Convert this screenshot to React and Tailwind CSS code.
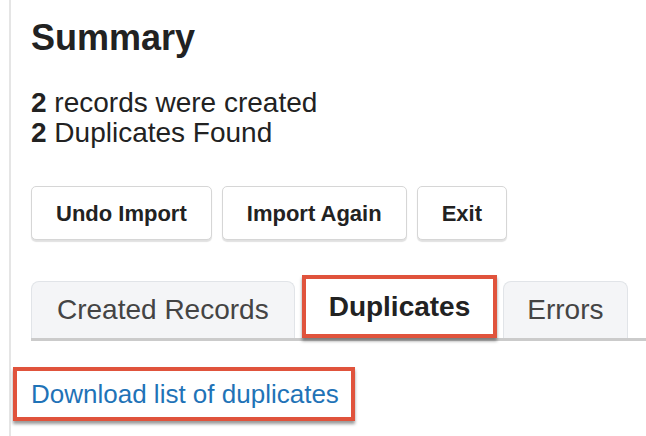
export default function App() {
  return (
    <div className="w-[646px] h-[436px] overflow-hidden bg-white font-['Liberation_Sans',Arial,sans-serif] text-[#222]">
      <div className="ml-[9px] h-full border-l-[2px] border-[#e5e5e5] pl-[20px] pt-[18px]">
        {/* heading */}
        <h1 className="text-[36px] leading-[40px] font-bold">Summary</h1>

        {/* counts */}
        <div className="mt-[30px] text-[28px] leading-[30px]">
          <p><b>2</b> records were created</p>
          <p><b>2</b> Duplicates Found</p>
        </div>

        {/* actions */}
        <div className="mt-[38px] flex gap-[10px]">
          {['Undo Import', 'Import Again', 'Exit'].map((label) => (
            <button
              key={label}
              className="h-[54px] px-[24px] rounded-[5px] border border-[#d6d6d6] bg-white text-[22px] font-bold text-[#222] shadow-[0_2px_1px_rgba(0,0,0,0.12)]"
            >
              {label}
            </button>
          ))}
        </div>

        {/* tabs */}
        <div className="mt-[35px] flex items-end border-b-[3px] border-[#cbcbcb]">
          <div className="h-[57px] px-[25px] flex items-center bg-[#f4f5f7] border border-b-0 border-[#e1e4e8] rounded-t-[8px] text-[28px] text-[#444]">
            Created Records
          </div>
          <div className="ml-[7px] h-[63px] px-[23px] flex items-center bg-white border-[4px] border-[#e0533c] shadow-[0_3px_3px_rgba(0,0,0,0.4)] text-[28px] font-bold text-[#222]">
            Duplicates
          </div>
          <div className="ml-[6px] h-[57px] px-[23px] flex items-center bg-[#f4f5f7] border border-b-0 border-[#e1e4e8] rounded-t-[8px] text-[28px] text-[#444]">
            Errors
          </div>
        </div>

        {/* download link */}
        <div className="mt-[26px] -ml-[18px] inline-flex h-[54px] items-center pl-[14px] pr-[12px] border-[4px] border-[#e0533c] shadow-[0_3px_3px_rgba(0,0,0,0.4)]">
          <a href="#" className="text-[26px] leading-[46px] text-[#1f73b7]">
            Download list of duplicates
          </a>
        </div>
      </div>
    </div>
  );
}
